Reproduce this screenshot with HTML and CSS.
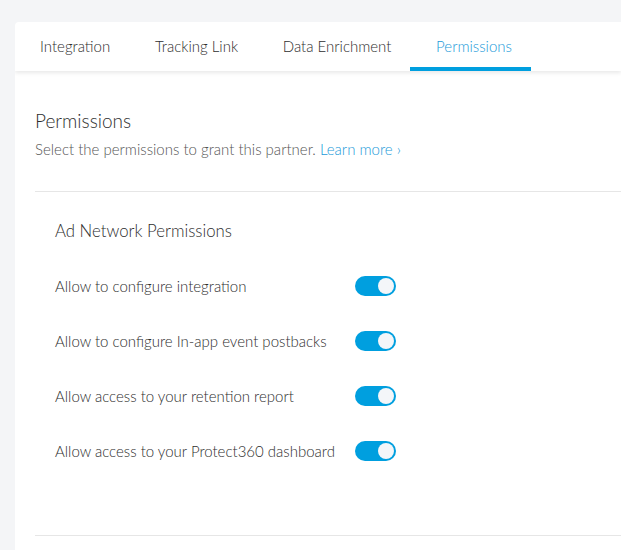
FILE: index.html
```html
<!DOCTYPE html>
<html>
<head>
<meta charset="utf-8">
<link rel="stylesheet" href="styles.css">
</head>
<body>
<div class="card">
  <nav class="tabs">
    <div class="tab">Integration</div>
    <div class="tab">Tracking Link</div>
    <div class="tab">Data Enrichment</div>
    <div class="tab active">Permissions</div>
  </nav>
  <main class="content">
    <h2 class="title">Permissions</h2>
    <p class="subtitle">Select the permissions to grant this partner. <a class="link" href="#">Learn more &rsaquo;</a></p>
    <hr class="divider">
    <section class="group">
      <h3 class="group-title">Ad Network Permissions</h3>
      <div class="rows">
        <div class="row"><span class="label">Allow to configure integration</span><span class="toggle"><span class="knob"></span></span></div>
        <div class="row"><span class="label">Allow to configure In-app event postbacks</span><span class="toggle"><span class="knob"></span></span></div>
        <div class="row"><span class="label">Allow access to your retention report</span><span class="toggle"><span class="knob"></span></span></div>
        <div class="row"><span class="label">Allow access to your Protect360 dashboard</span><span class="toggle"><span class="knob"></span></span></div>
      </div>
    </section>
    <hr class="divider bottom">
  </main>
</div>
</body>
</html>
```
FILE: styles.css
```css
html, body {
  margin: 0;
  padding: 0;
  background: #f4f5f7;
  font-family: "Lato", "Noto Sans", sans-serif;
  color: #3d3d3d;
}
body {
  padding: 22px 0 0 15px;
  height: 550px;
  box-sizing: border-box;
  overflow: hidden;
}
.card {
  background: #fff;
  border-radius: 4px 0 0 0;
  height: 528px;
  overflow: hidden;
}
.tabs {
  display: flex;
  height: 49px;
  padding-left: 25px;
  box-shadow: 0 2px 4px rgba(0,0,0,0.09);
  position: relative;
  z-index: 1;
}
.tab {
  position: relative;
  display: flex;
  align-items: center;
  margin-right: 44.7px;
  font-size: 15px;
  font-weight: 300;
  color: #2e2e2e;
  height: 100%;
  padding-bottom: 1px;
  box-sizing: border-box;
}
.tab.active {
  color: #1a9ad9;
}
.tab.active::after {
  content: "";
  position: absolute;
  left: -26px;
  right: -19px;
  bottom: 0;
  height: 4px;
  background: #009fdf;
}
.content {
  padding: 37px 0 0 20px;
}
.title {
  margin: 0;
  font-size: 19px;
  font-weight: 300;
  color: #2e2e2e;
  line-height: 25px;
}
.subtitle {
  margin: 6px 0 0;
  font-size: 15px;
  font-weight: 300;
  color: #555;
  line-height: 21px;
}
.link {
  color: #1a9ad9;
  text-decoration: none;
}
.divider {
  border: 0;
  border-top: 1px solid #e6e6e6;
  margin: 31px 0 0;
}
.group {
  padding: 27px 0 0 20px;
  height: 343px;
  box-sizing: border-box;
}
.group-title {
  margin: 0;
  font-size: 16.8px;
  font-weight: 300;
  color: #2e2e2e;
  line-height: 23px;
}
.rows {
  margin-top: 16px;
}
.row {
  display: flex;
  align-items: center;
  height: 55px;
}
.label {
  width: 300px;
  font-size: 15px;
  font-weight: 300;
  color: #2e2e2e;
}
.toggle {
  width: 41px;
  height: 20px;
  border-radius: 10px;
  background: #009fdf;
  display: flex;
  align-items: center;
  justify-content: flex-end;
  padding: 0 2px;
  box-sizing: border-box;
}
.knob {
  width: 16px;
  height: 16px;
  border-radius: 50%;
  background: #f4f6f9;
}
.bottom {
  margin-top: 0;
}
```
